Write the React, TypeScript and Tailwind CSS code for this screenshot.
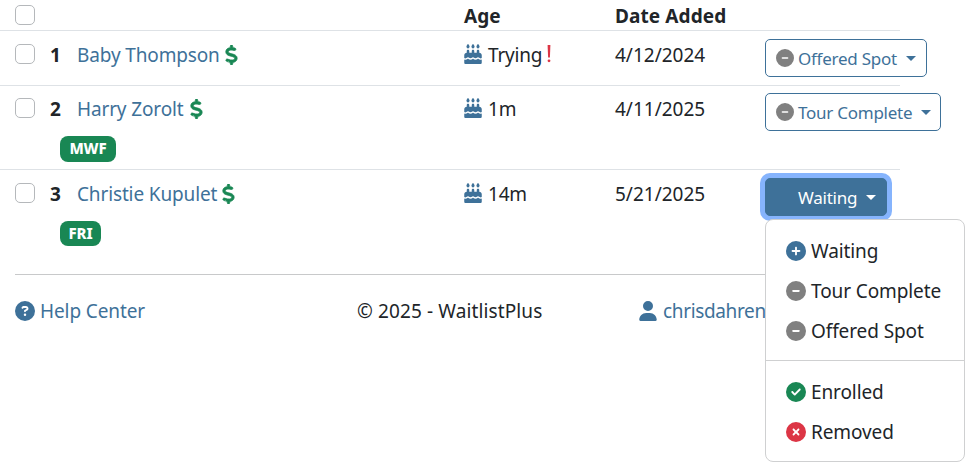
import { ReactNode } from "react";
import { FaCakeCandles, FaCircleCheck, FaCircleMinus, FaCirclePlus, FaCircleQuestion, FaCircleXmark, FaDollarSign, FaUser } from "react-icons/fa6";

interface Child {
    id: number
    name: string
    age: string
    trying?: boolean
    added: string
    days?: string
    status: string
    open?: boolean
    rowClass: string
    badgeClass?: string
    nameClass: string
    ageClass: string
    statusClass: string
}

const children: Child[] = [
    { id: 1, name: "Baby Thompson", age: "Trying", trying: true, added: "4/12/2024", status: "Offered Spot", rowClass: "h-[55px] pt-2", nameClass: "w-[142px]", ageClass: "w-[54px]", statusClass: "w-[162px]" },
    { id: 2, name: "Harry Zorolt", age: "1m", added: "4/11/2025", days: "MWF", status: "Tour Complete", rowClass: "h-[84px] pt-[7px]", badgeClass: "mt-[18px] h-[26px] w-14", nameClass: "w-[107px]", ageClass: "w-[28px]", statusClass: "w-[176px]" },
    { id: 3, name: "Christie Kupulet", age: "14m", added: "5/21/2025", days: "FRI", status: "Waiting", open: true, rowClass: "h-[105px] pt-2", badgeClass: "mt-[18px] h-[25px] w-[41px]", nameClass: "w-[139px]", ageClass: "w-[38px]", statusClass: "w-[122px]" },
];

const Checkbox = () => (
    <input type="checkbox" className="block h-5 w-5 shrink-0 appearance-none rounded-[5px] border border-[#b5b8bb] bg-white" />
);

const Caret = () => (
    <span className="border-x-[5px] border-t-[5px] border-x-transparent border-t-current"></span>
);

interface MenuItemProps {
    icon: ReactNode
    label: string
}

const MenuItem = ({ icon, label }: MenuItemProps) => (
    <button type="button" className="flex h-10 w-full items-center gap-[5.5px] pl-[19.5px] text-left">
        {icon}
        <span className="tracking-[-0.1px]">{label}</span>
    </button>
);

const StatusMenu = () => (
    <div className="absolute left-0 top-[41px] z-10 h-[243px] w-[200px] rounded-lg border border-[#cfd0d1] bg-white pt-[11px] text-[19px] tracking-normal text-[#212529]">
        <MenuItem icon={<FaCirclePlus className="h-5 w-5 text-[#3e7199]" />} label="Waiting" />
        <MenuItem icon={<FaCircleMinus className="h-5 w-5 text-[#808080]" />} label="Tour Complete" />
        <MenuItem icon={<FaCircleMinus className="h-5 w-5 text-[#808080]" />} label="Offered Spot" />
        <div className="mb-[11px] mt-[9px] border-t border-[#cfd0d1]"></div>
        <MenuItem icon={<FaCircleCheck className="h-5 w-5 text-[#198754]" />} label="Enrolled" />
        <MenuItem icon={<FaCircleXmark className="h-5 w-5 text-[#dc3545]" />} label="Removed" />
    </div>
);

const StatusButton = ({ child }: { child: Child }) => (
    <div className="relative">
        <button type="button" className={`flex h-[38px] items-center rounded-[5px] border border-[#3e7199] pl-[10px] text-[17px] tracking-[-0.25px] ${child.statusClass} ${child.open ? "bg-[#3e7199] text-white ring-[5px] ring-[#86b4fd]" : "bg-white text-[#3e7199]"}`}>
            {child.open ? <span className="w-[18px]"></span> : <FaCircleMinus className="h-[18px] w-[18px] text-[#808080]" />}
            <span className="ml-1 mr-[9px] whitespace-nowrap pt-px">{child.status}</span>
            <Caret />
        </button>
        {child.open && <StatusMenu />}
    </div>
);

const Row = ({ child }: { child: Child }) => (
    <div className={`flex border-t border-[#dee2e6] pl-[15px] ${child.rowClass}`}>
        <div className="w-[449px] shrink-0 pt-[5px]">
            <div className="flex h-5 items-center">
                <Checkbox />
                <span className="ml-[15px] w-[27px] pt-0.5 font-bold">{child.id}</span>
                <a className={`whitespace-nowrap pt-0.5 tracking-[-0.14px] text-[#3e7199] ${child.nameClass}`}>{child.name}</a>
                <FaDollarSign className="ml-[6px] mt-0.5 h-5 w-[13px] stroke-[#198754] stroke-[20] text-[#198754]" />
            </div>
            {child.days && (
                <span className={`ml-[45px] flex items-center justify-center rounded-lg bg-[#198754] pb-0.5 text-[15px] font-extrabold leading-5 tracking-[-0.1px] text-white ${child.badgeClass}`}>{child.days}</span>
            )}
        </div>
        <div className="flex h-[30px] w-[151px] shrink-0 items-center">
            <FaCakeCandles className="h-5 w-[18px] text-[#3e7199]" />
            <span className={`ml-[6px] pt-px tracking-[-0.2px] ${child.ageClass}`}>{child.age}</span>
            {child.trying && (
                <svg className="ml-[5px] h-[18px] w-1" viewBox="0 0 4 18" fill="#dc3545">
                    <path d="M.6 0h2.8l-.5 12.5H1.1z" />
                    <circle cx="2" cy="15.8" r="1.4" />
                </svg>
            )}
        </div>
        <div className="flex h-[30px] w-[150px] shrink-0 items-center pt-0.5">{child.added}</div>
        <StatusButton child={child} />
    </div>
);

const App = () => {
    return (
        <div className="h-[476px] w-[977px] overflow-hidden bg-white font-['Noto_Sans',sans-serif] text-[19px] leading-5 text-[#212529]">
            <div className="w-[900px]">
                <div className="flex h-[30px] items-center pl-[15px] font-bold">
                    <div className="w-[449px]"><Checkbox /></div>
                    <div className="w-[151px] pt-0.5">Age</div>
                    <div className="pt-0.5 tracking-[0.1px]">Date Added</div>
                </div>
                {children.map((child) => <Row key={child.id} child={child} />)}
            </div>
            <footer className="ml-[15px] w-[870px] border-t border-[#c8c9ca]">
                <div className="flex h-[71px] items-center">
                    <a className="flex w-[342px] items-center gap-[5px] text-[#3e7199]">
                        <FaCircleQuestion className="h-5 w-5" />
                        <span className="pt-px tracking-[-0.1px]">Help Center</span>
                    </a>
                    <span className="w-[282px] pt-px tracking-[0.12px]">&copy; 2025 - WaitlistPlus</span>
                    <a className="flex items-center gap-[6px] text-[#3e7199]">
                        <FaUser className="h-5 w-[18px]" />
                        <span className="pt-px tracking-[-0.35px]">chrisdahren</span>
                    </a>
                </div>
            </footer>
        </div>
    )
};

export default App;
